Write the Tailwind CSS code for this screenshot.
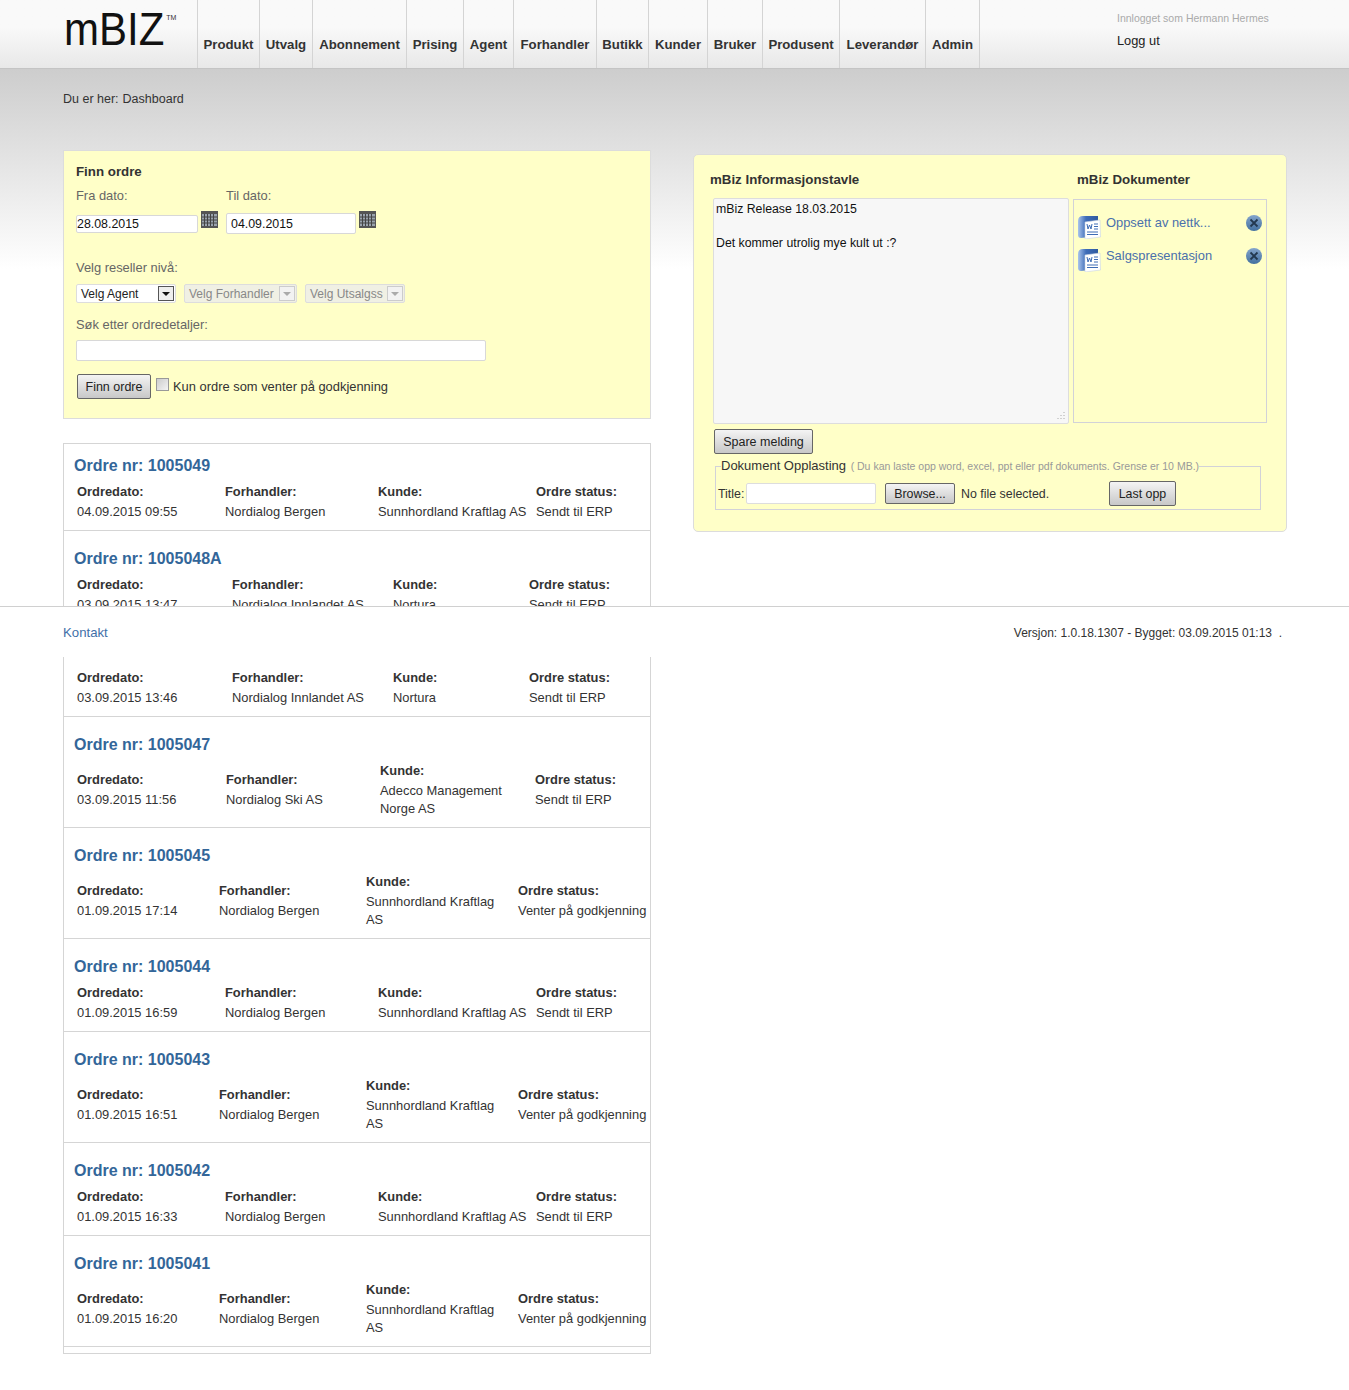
<!DOCTYPE html>
<html lang="en">
  <head>
    <meta charset="UTF-8" />
    <meta name="viewport" content="width=device-width, initial-scale=1.0" />
    <title>mBiz Dashboard</title>
    <script src="https://cdn.jsdelivr.net/npm/@tailwindcss/browser@4"></script>
  </head>
  <body class="relative h-[1390px] bg-white font-['Liberation_Sans',sans-serif] text-[12.9px] leading-[18px] text-[#333]">
    <!-- header -->
    <header class="flex h-[69px] border-b border-[#c4c4c4] bg-gradient-to-b from-[#f9f9f9] from-40% to-[#e8e8e8]">
      <div class="w-[197px] pl-[64px] pt-[5px]">
        <span class="inline-block origin-bottom scale-y-110 text-[42px] leading-[54px] text-[#111]">mBIZ</span><span class="relative top-[-26px] ml-[2px] text-[7px] text-[#333]">TM</span>
      </div>
      <nav class="flex h-[68px] border-l border-[#d4d4d4] text-[13.2px] font-bold">
        <a class="w-[62px] border-r border-[#d4d4d4] pt-[36px] text-center">Produkt</a>
        <a class="w-[53px] border-r border-[#d4d4d4] pt-[36px] text-center">Utvalg</a>
        <a class="w-[94px] border-r border-[#d4d4d4] pt-[36px] text-center">Abonnement</a>
        <a class="w-[57px] border-r border-[#d4d4d4] pt-[36px] text-center">Prising</a>
        <a class="w-[50px] border-r border-[#d4d4d4] pt-[36px] text-center">Agent</a>
        <a class="w-[83px] border-r border-[#d4d4d4] pt-[36px] text-center">Forhandler</a>
        <a class="w-[52px] border-r border-[#d4d4d4] pt-[36px] text-center">Butikk</a>
        <a class="w-[59px] border-r border-[#d4d4d4] pt-[36px] text-center">Kunder</a>
        <a class="w-[55px] border-r border-[#d4d4d4] pt-[36px] text-center">Bruker</a>
        <a class="w-[77px] border-r border-[#d4d4d4] pt-[36px] text-center">Produsent</a>
        <a class="w-[86px] border-r border-[#d4d4d4] pt-[36px] text-center">Leverandør</a>
        <a class="w-[54px] border-r border-[#d4d4d4] pt-[36px] text-center">Admin</a>
      </nav>
      <div class="ml-[137px] pt-[9px]">
        <p class="text-[10.5px] text-[#aaa]">Innlogget som Hermann Hermes</p>
        <p class="mt-[5px] text-[12.8px] text-[#222]">Logg ut</p>
      </div>
    </header>

    <main class="bg-gradient-to-b from-[#cdcdcd] to-white to-[200px] bg-no-repeat px-[63px] pt-[21px]">
      <p class="text-[12.5px]">Du er her:<span class="ml-[4px]">Dashboard</span></p>

      <div class="mt-[42px] flex items-start">
        <!-- left column -->
        <div class="w-[588px] shrink-0">
          <form class="h-[269px] border border-[#dcdcdc] bg-[#ffffc8] px-[12px] pt-[12px]">
            <h2 class="text-[13.3px] font-bold">Finn ordre</h2>
            <div class="mt-[6px] flex h-[18px] text-[#666]">
              <label class="w-[150px]">Fra dato:</label>
              <label>Til dato:</label>
            </div>
            <div class="mt-[6px] flex h-[24px] items-start text-[12.4px]">
              <input value="28.08.2015" class="mt-[4px] h-[18px] w-[122px] rounded-[2px] border border-[#d8d8d8] bg-white text-[#111]" />
              <svg class="ml-[3px] h-[17px] w-[17px]" viewBox="0 0 17 17"><rect width="17" height="17" fill="#555" /><rect x="1" y="3" width="15" height="12" fill="#9aa3ad" /><path d="M3.500 3v12M6.500 3v12M9.500 3v12M12.500 3v12M1 6h15M1 9h15M1 12h15" stroke="#444" /></svg>
              <input value="04.09.2015" class="ml-[8px] mt-[2px] h-[21px] w-[130px] rounded-[2px] border border-[#d8d8d8] bg-white pl-[4px] text-[#111]" />
              <svg class="ml-[3px] h-[17px] w-[17px]" viewBox="0 0 17 17"><rect width="17" height="17" fill="#555" /><rect x="1" y="3" width="15" height="12" fill="#9aa3ad" /><path d="M3.500 3v12M6.500 3v12M9.500 3v12M12.500 3v12M1 6h15M1 9h15M1 12h15" stroke="#444" /></svg>
            </div>
            <p class="mt-[24px] text-[#666]">Velg reseller nivå:</p>
            <div class="mt-[7px] flex h-[19px] gap-[8px] text-[12px]">
              <div class="flex w-[100px] items-center justify-between rounded-[2px] border border-[#ddd] bg-white pl-[4px] pr-[1px] text-[#222]">
                Velg Agent
                <span class="flex h-[15px] w-[16px] items-center justify-center border border-[#555] bg-[#eee]"><span class="border-x-[4px] border-t-[4px] border-x-transparent border-t-[#111]"></span></span>
              </div>
              <div class="flex w-[113px] items-center justify-between rounded-[2px] border border-[#ddd] bg-[#f0f0e4] pl-[4px] pr-[1px] text-[#888]">
                Velg Forhandler
                <span class="flex h-[15px] w-[16px] items-center justify-center border border-[#ccc] bg-[#f2f2f2]"><span class="border-x-[4px] border-t-[4px] border-x-transparent border-t-[#aaa]"></span></span>
              </div>
              <div class="flex w-[100px] items-center justify-between rounded-[2px] border border-[#ddd] bg-[#f0f0e4] pl-[4px] pr-[1px] text-[#888]">
                Velg Utsalgss
                <span class="flex h-[15px] w-[16px] shrink-0 items-center justify-center border border-[#ccc] bg-[#f2f2f2]"><span class="border-x-[4px] border-t-[4px] border-x-transparent border-t-[#aaa]"></span></span>
              </div>
            </div>
            <p class="mt-[13px] text-[#666]">Søk etter ordredetaljer:</p>
            <input class="mt-[6px] block h-[21px] w-[410px] rounded-[2px] border border-[#d8d8d8] bg-white" />
            <div class="mt-[13px] flex items-start">
              <button type="button" class="ml-[1px] h-[25px] w-[74px] rounded-[2px] border border-[#666] bg-gradient-to-b from-[#f4f4f4] to-[#c8c8c8] text-[12.5px] text-[#222]">Finn ordre</button>
              <span class="ml-[5px] mt-[4px] h-[13px] w-[13px] border border-[#999] bg-gradient-to-br from-[#ccc] to-[#f4f4f4]"></span>
              <span class="ml-[4px] mt-[4px]">Kun ordre som venter på godkjenning</span>
            </div>
          </form>

          <!-- orders -->
          <section class="mt-[24px] h-[911px] border border-[#d5d5d5]">
            <article class="h-[87px] border-b border-[#d5d5d5] pt-[13px]">
              <h3 class="pl-[10px] text-[16px] font-bold text-[#336699]">Ordre nr: 1005049</h3>
              <div class="mt-[8px] grid grid-cols-[148px_153px_158px_1fr] items-center pl-[13px]">
                <div><b class="mb-[2px] block">Ordredato:</b>04.09.2015 09:55</div>
                <div><b class="mb-[2px] block">Forhandler:</b>Nordialog Bergen</div>
                <div><b class="mb-[2px] block">Kunde:</b>Sunnhordland Kraftlag AS</div>
                <div><b class="mb-[2px] block">Ordre status:</b>Sendt til ERP</div>
              </div>
            </article>
            <article class="h-[93px] border-b border-[#d5d5d5] pt-[19px]">
              <h3 class="pl-[10px] text-[16px] font-bold text-[#336699]">Ordre nr: 1005048A</h3>
              <div class="mt-[8px] grid grid-cols-[155px_161px_136px_1fr] items-center pl-[13px]">
                <div><b class="mb-[2px] block">Ordredato:</b>03.09.2015 13:47</div>
                <div><b class="mb-[2px] block">Forhandler:</b>Nordialog Innlandet AS</div>
                <div><b class="mb-[2px] block">Kunde:</b>Nortura</div>
                <div><b class="mb-[2px] block">Ordre status:</b>Sendt til ERP</div>
              </div>
            </article>
            <article class="h-[93px] border-b border-[#d5d5d5] pt-[19px]">
              <h3 class="pl-[10px] text-[16px] font-bold text-[#336699]">Ordre nr: 1005048</h3>
              <div class="mt-[8px] grid grid-cols-[155px_161px_136px_1fr] items-center pl-[13px]">
                <div><b class="mb-[2px] block">Ordredato:</b>03.09.2015 13:46</div>
                <div><b class="mb-[2px] block">Forhandler:</b>Nordialog Innlandet AS</div>
                <div><b class="mb-[2px] block">Kunde:</b>Nortura</div>
                <div><b class="mb-[2px] block">Ordre status:</b>Sendt til ERP</div>
              </div>
            </article>
            <article class="h-[111px] border-b border-[#d5d5d5] pt-[19px]">
              <h3 class="pl-[10px] text-[16px] font-bold text-[#336699]">Ordre nr: 1005047</h3>
              <div class="mt-[8px] grid grid-cols-[149px_154px_155px_1fr] items-center pl-[13px]">
                <div><b class="mb-[2px] block">Ordredato:</b>03.09.2015 11:56</div>
                <div><b class="mb-[2px] block">Forhandler:</b>Nordialog Ski AS</div>
                <div><b class="mb-[2px] block">Kunde:</b>Adecco Management<br />Norge AS</div>
                <div><b class="mb-[2px] block">Ordre status:</b>Sendt til ERP</div>
              </div>
            </article>
            <article class="h-[111px] border-b border-[#d5d5d5] pt-[19px]">
              <h3 class="pl-[10px] text-[16px] font-bold text-[#336699]">Ordre nr: 1005045</h3>
              <div class="mt-[8px] grid grid-cols-[142px_147px_152px_1fr] items-center pl-[13px]">
                <div><b class="mb-[2px] block">Ordredato:</b>01.09.2015 17:14</div>
                <div><b class="mb-[2px] block">Forhandler:</b>Nordialog Bergen</div>
                <div><b class="mb-[2px] block">Kunde:</b>Sunnhordland Kraftlag<br />AS</div>
                <div><b class="mb-[2px] block">Ordre status:</b>Venter på godkjenning</div>
              </div>
            </article>
            <article class="h-[93px] border-b border-[#d5d5d5] pt-[19px]">
              <h3 class="pl-[10px] text-[16px] font-bold text-[#336699]">Ordre nr: 1005044</h3>
              <div class="mt-[8px] grid grid-cols-[148px_153px_158px_1fr] items-center pl-[13px]">
                <div><b class="mb-[2px] block">Ordredato:</b>01.09.2015 16:59</div>
                <div><b class="mb-[2px] block">Forhandler:</b>Nordialog Bergen</div>
                <div><b class="mb-[2px] block">Kunde:</b>Sunnhordland Kraftlag AS</div>
                <div><b class="mb-[2px] block">Ordre status:</b>Sendt til ERP</div>
              </div>
            </article>
            <article class="h-[111px] border-b border-[#d5d5d5] pt-[19px]">
              <h3 class="pl-[10px] text-[16px] font-bold text-[#336699]">Ordre nr: 1005043</h3>
              <div class="mt-[8px] grid grid-cols-[142px_147px_152px_1fr] items-center pl-[13px]">
                <div><b class="mb-[2px] block">Ordredato:</b>01.09.2015 16:51</div>
                <div><b class="mb-[2px] block">Forhandler:</b>Nordialog Bergen</div>
                <div><b class="mb-[2px] block">Kunde:</b>Sunnhordland Kraftlag<br />AS</div>
                <div><b class="mb-[2px] block">Ordre status:</b>Venter på godkjenning</div>
              </div>
            </article>
            <article class="h-[93px] border-b border-[#d5d5d5] pt-[19px]">
              <h3 class="pl-[10px] text-[16px] font-bold text-[#336699]">Ordre nr: 1005042</h3>
              <div class="mt-[8px] grid grid-cols-[148px_153px_158px_1fr] items-center pl-[13px]">
                <div><b class="mb-[2px] block">Ordredato:</b>01.09.2015 16:33</div>
                <div><b class="mb-[2px] block">Forhandler:</b>Nordialog Bergen</div>
                <div><b class="mb-[2px] block">Kunde:</b>Sunnhordland Kraftlag AS</div>
                <div><b class="mb-[2px] block">Ordre status:</b>Sendt til ERP</div>
              </div>
            </article>
            <article class="h-[111px] border-b border-[#d5d5d5] pt-[19px]">
              <h3 class="pl-[10px] text-[16px] font-bold text-[#336699]">Ordre nr: 1005041</h3>
              <div class="mt-[8px] grid grid-cols-[142px_147px_152px_1fr] items-center pl-[13px]">
                <div><b class="mb-[2px] block">Ordredato:</b>01.09.2015 16:20</div>
                <div><b class="mb-[2px] block">Forhandler:</b>Nordialog Bergen</div>
                <div><b class="mb-[2px] block">Kunde:</b>Sunnhordland Kraftlag<br />AS</div>
                <div><b class="mb-[2px] block">Ordre status:</b>Venter på godkjenning</div>
              </div>
            </article>
          </section>
        </div>

        <!-- right column -->
        <aside class="ml-[42px] mt-[4px] h-[378px] w-[594px] shrink-0 rounded-[5px] border border-[#dcdcdc] bg-[#ffffc8] pl-[16px] pt-[16px]">
          <div class="flex text-[13.3px] font-bold">
            <h2 class="w-[367px]">mBiz Informasjonstavle</h2>
            <h2>mBiz Dokumenter</h2>
          </div>
          <div class="mt-[9px] flex items-start">
            <div class="relative ml-[3px] h-[226px] w-[356px] rounded-[2px] border border-[#ddd] bg-[#f7f7f7] py-[2px] pl-[2px] text-[12.3px] leading-[17px] text-[#111]">
              <p>mBiz Release 18.03.2015</p>
              <p class="mt-[17px]">Det kommer utrolig mye kult ut :?</p>
              <svg class="absolute bottom-[3px] right-[3px] h-[9px] w-[9px]" viewBox="0 0 9 9"><path d="M8 1v1M8 4v1M8 7v1M5 4v1M5 7v1M2 7v1" stroke="#aaa" /></svg>
            </div>
            <div class="ml-[4px] mt-[1px] h-[224px] w-[194px] border border-[#d2d2d8] pl-[3px] pr-[4px] pt-[15px]">
              <div class="flex h-[33px] items-start">
                <svg class="mr-[5px] h-[24px] w-[24px] shrink-0" viewBox="0 0 24 24"><defs><linearGradient id="wordBlue" x1="0" y1="0" x2="1" y2="0"><stop offset="0" stop-color="#a9c4ec" /><stop offset=".4" stop-color="#3f6db8" /><stop offset="1" stop-color="#2f5aa0" /></linearGradient></defs><path d="M1 6 Q1 1 6 1 L21 1 L21 21 L4 23 Q1 23 1 20 Z" fill="url(#wordBlue)" /><path d="M8 7 L23 5 L23.500 22 L8 24 Z" fill="#fff" stroke="#c8d4e6" stroke-width=".6" /><path d="M10 9l1 5 1.500-4 1.500 4 1-5M17 9h4M17 11.500h4M17 14h4M10 17h11M10 19.500h11" stroke="#3e6cb5" fill="none" /></svg>
                <a class="mt-[-1px] w-[141px] text-[#4a70ac]">Oppsett av nettk...</a>
                <svg class="h-[16px] w-[16px] shrink-0" viewBox="0 0 16 16"><defs><linearGradient id="closeBlue" x1="0" y1="0" x2="0" y2="1"><stop offset="0" stop-color="#84a5cc" /><stop offset="1" stop-color="#43709f" /></linearGradient></defs><circle cx="8" cy="8" r="8" fill="url(#closeBlue)" /><path d="M4.500 4.500l7 7M11.500 4.500l-7 7" stroke="#23384f" stroke-width="1.800" /></svg>
              </div>
              <div class="flex h-[33px] items-start">
                <svg class="mr-[5px] h-[24px] w-[24px] shrink-0" viewBox="0 0 24 24"><path d="M1 6 Q1 1 6 1 L21 1 L21 21 L4 23 Q1 23 1 20 Z" fill="url(#wordBlue)" /><path d="M8 7 L23 5 L23.500 22 L8 24 Z" fill="#fff" stroke="#c8d4e6" stroke-width=".6" /><path d="M10 9l1 5 1.500-4 1.500 4 1-5M17 9h4M17 11.500h4M17 14h4M10 17h11M10 19.500h11" stroke="#3e6cb5" fill="none" /></svg>
                <a class="mt-[-1px] w-[141px] text-[#4a70ac]">Salgspresentasjon</a>
                <svg class="h-[16px] w-[16px] shrink-0" viewBox="0 0 16 16"><circle cx="8" cy="8" r="8" fill="url(#closeBlue)" /><path d="M4.500 4.500l7 7M11.500 4.500l-7 7" stroke="#23384f" stroke-width="1.800" /></svg>
              </div>
            </div>
          </div>
          <button type="button" class="ml-[4px] mt-[5px] block h-[25px] w-[99px] rounded-[2px] border border-[#666] bg-gradient-to-b from-[#f4f4f4] to-[#c8c8c8] text-[12.5px] text-[#222]">Spare melding</button>
          <fieldset class="relative ml-[5px] mt-[3px] h-[53px] w-[546px] border border-[#d2d2d8] pl-[2px]">
            <legend class="ml-[3px] whitespace-nowrap text-[13px]">Dokument Opplasting <span class="ml-[1px] text-[10.5px] text-[#999]">( Du kan laste opp word, excel, ppt eller pdf dokuments. Grense er 10 MB.)</span></legend>
            <div class="mt-[6px] flex items-center text-[12.4px]">
              <label class="w-[28px]">Title:</label>
              <input class="h-[21px] w-[130px] rounded-[2px] border border-[#ddd] bg-white" />
              <button type="button" class="ml-[9px] h-[21px] w-[70px] rounded-[2px] border border-[#666] bg-gradient-to-b from-[#f4f4f4] to-[#c8c8c8] text-[#222]">Browse...</button>
              <span class="ml-[6px] w-[148px]">No file selected.</span>
              <button type="button" class="h-[25px] w-[67px] rounded-[2px] border border-[#666] bg-gradient-to-b from-[#f4f4f4] to-[#c8c8c8] text-[#222]">Last opp</button>
            </div>
          </fieldset>
        </aside>
      </div>
    </main>

    <!-- footer sits over the order list -->
    <footer class="absolute left-0 right-0 top-[606px] flex h-[51px] items-center justify-between border-t border-[#d0d0d0] bg-white pl-[63px] pr-[67px] pt-[1px]">
      <a class="text-[13.2px] text-[#3f6fa8]">Kontakt</a>
      <span class="text-[12px] text-[#333]">Versjon: 1.0.18.1307 - Bygget: 03.09.2015 01:13&nbsp; .</span>
    </footer>
  </body>
</html>
